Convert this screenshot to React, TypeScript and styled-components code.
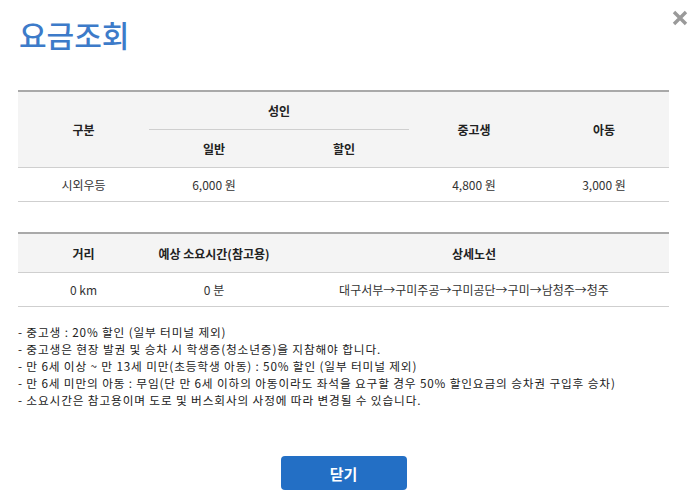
import React from 'react';
import styled, { createGlobalStyle } from 'styled-components';

const GlobalStyle = createGlobalStyle`
  html, body {
    margin: 0;
    padding: 0;
    background: #fff;
  }
  body {
    font-family: "Noto Sans CJK KR", "Noto Sans", sans-serif;
    color: #333;
  }
`;

const Popup = styled.div`
  position: relative;
  width: 696px;
  height: 497px;
  box-sizing: border-box;
  padding: 12px 27px 0 18px;
  display: flex;
  flex-direction: column;
`;

const Title = styled.h1`
  margin: 0 0 0 1px;
  font-size: 30px;
  line-height: 44px;
  font-weight: 500;
  color: #3d7bc9;
`;

const CloseButton = styled.button`
  position: absolute;
  top: 10px;
  right: 8px;
  width: 16px;
  height: 16px;
  padding: 0;
  border: none;
  background: none;
  cursor: pointer;
  display: flex;
  align-items: center;
  justify-content: center;
`;

const Table = styled.table<{ $gap: number }>`
  width: 651px;
  margin-top: ${p => p.$gap}px;
  border-collapse: collapse;
  table-layout: fixed;
  border-top: 2px solid #a9a9a9;
  font-size: 12px;
`;

const Th = styled.th<{ $h?: number }>`
  background: #f4f4f4;
  height: ${p => p.$h ?? 37}px;
  padding: 0;
  font-weight: 700;
  color: #222;
  text-align: center;
  border-bottom: 1px solid #cfcfcf;
`;

const Td = styled.td`
  height: 33px;
  padding: 0;
  text-align: center;
  color: #333;
  border-bottom: 1px solid #cfcfcf;
`;

const Notes = styled.ul`
  list-style: none;
  margin: 16px 0 0;
  padding: 0;
  font-size: 11.7px;
  line-height: 17px;
  letter-spacing: 0.85px;
  color: #222;
`;

const Note = styled.li`
  white-space: nowrap;
`;

const Footer = styled.div`
  display: flex;
  justify-content: center;
  margin-top: 48px;
`;

const ConfirmButton = styled.button`
  width: 126px;
  height: 34px;
  border: none;
  border-radius: 4px;
  background: #236fc5;
  color: #fff;
  font-family: "Noto Sans CJK KR", sans-serif;
  font-size: 15px;
  font-weight: 700;
  cursor: pointer;
`;

const notes = [
  '- 중고생 : 20% 할인 (일부 터미널 제외)',
  '- 중고생은 현장 발권 및 승차 시 학생증(청소년증)을 지참해야 합니다.',
  '- 만 6세 이상 ~ 만 13세 미만(초등학생 아동) : 50% 할인 (일부 터미널 제외)',
  '- 만 6세 미만의 아동 : 무임(단 만 6세 이하의 아동이라도 좌석을 요구할 경우 50% 할인요금의 승차권 구입후 승차)',
  '- 소요시간은 참고용이며 도로 및 버스회사의 사정에 따라 변경될 수 있습니다.',
];

export default function App() {
  return (
    <>
      <GlobalStyle />
      <Popup>
        <Title>요금조회</Title>
        <CloseButton aria-label="닫기">
          <svg width="16" height="16" viewBox="0 0 16 16">
            <path d="M2 2 L14 14 M14 2 L2 14" stroke="#9a9a9a" strokeWidth="3.4" />
          </svg>
        </CloseButton>

        <Table $gap={34}>
          <colgroup>
            <col style={{ width: 131 }} />
            <col style={{ width: 130 }} />
            <col style={{ width: 130 }} />
            <col style={{ width: 130 }} />
            <col style={{ width: 130 }} />
          </colgroup>
          <thead>
            <tr>
              <Th rowSpan={2}>구분</Th>
              <Th colSpan={2}>성인</Th>
              <Th rowSpan={2}>중고생</Th>
              <Th rowSpan={2}>아동</Th>
            </tr>
            <tr>
              <Th>일반</Th>
              <Th>할인</Th>
            </tr>
          </thead>
          <tbody>
            <tr>
              <Td>시외우등</Td>
              <Td>6,000 원</Td>
              <Td></Td>
              <Td>4,800 원</Td>
              <Td>3,000 원</Td>
            </tr>
          </tbody>
        </Table>

        <Table $gap={30}>
          <colgroup>
            <col style={{ width: 131 }} />
            <col style={{ width: 130 }} />
            <col style={{ width: 390 }} />
          </colgroup>
          <thead>
            <tr>
              <Th $h={38}>거리</Th>
              <Th $h={38}>예상 소요시간(참고용)</Th>
              <Th $h={38}>상세노선</Th>
            </tr>
          </thead>
          <tbody>
            <tr>
              <Td>0 km</Td>
              <Td>0 분</Td>
              <Td>대구서부→구미주공→구미공단→구미→남청주→청주</Td>
            </tr>
          </tbody>
        </Table>

        <Notes>
          {notes.map((n, i) => (
            <Note key={i}>{n}</Note>
          ))}
        </Notes>

        <Footer>
          <ConfirmButton>닫기</ConfirmButton>
        </Footer>
      </Popup>
    </>
  );
}
